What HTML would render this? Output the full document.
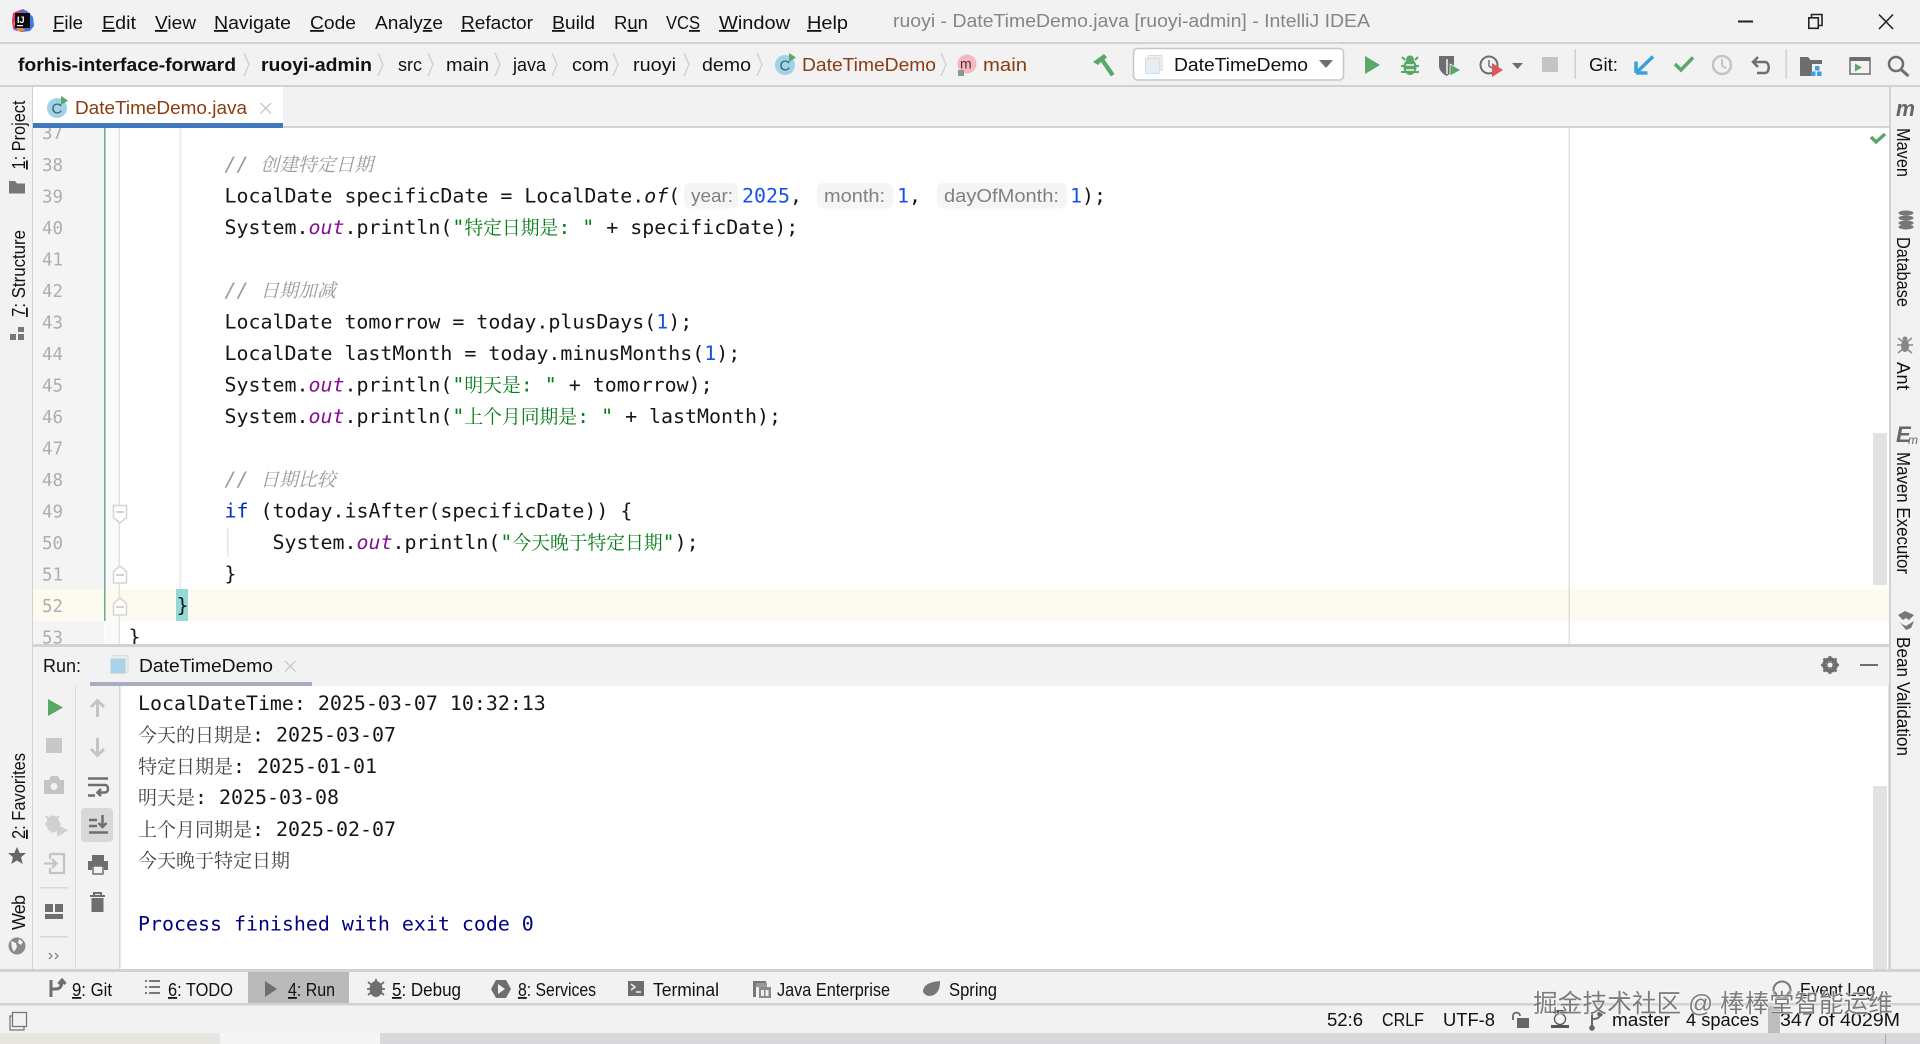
<!DOCTYPE html>
<html lang="zh"><head><meta charset="utf-8"><title>DateTimeDemo.java - IntelliJ IDEA</title>
<style>
html,body{margin:0;padding:0;width:1920px;height:1044px;overflow:hidden;background:#f2f2f2}
svg{display:block}
text{white-space:pre}
.s{font-family:"Liberation Sans","Noto Sans CJK SC",sans-serif;font-size:18px;fill:#111}
.b{font-weight:bold}
.o{fill:#8a3c10}
.m{font-family:"DejaVu Sans Mono","Liberation Mono",monospace;font-size:19.93px;fill:#151515}
.z{font-family:"Liberation Serif","Noto Serif CJK SC",serif;font-size:18.8px}
.y{font-family:"Liberation Serif","Noto Serif CJK SC",serif;font-size:19px;fill:#444}
.st{fill:#067d17}.cm{fill:#9a9a9a;font-style:italic}.k{fill:#0033b3}.n{fill:#1750eb}.f{fill:#871094;font-style:italic}
.ln{font-family:"DejaVu Sans Mono",monospace;font-size:17.5px;fill:#adadad}
.h{fill:#808080}
.u{text-decoration:underline}
</style></head><body>
<svg xmlns="http://www.w3.org/2000/svg" width="1920" height="1044" viewBox="0 0 1920 1044">
<rect width="1920" height="1044" fill="#f2f2f2"/>

<!-- editor -->
<rect x="33" y="128" width="1856" height="518" fill="#fff"/>
<rect x="33" y="128" width="71" height="518" fill="#f4f4f4"/>
<rect x="105" y="128" width="14" height="518" fill="#fafafa"/>
<rect x="33" y="589" width="1856" height="32" fill="#fdfbf0"/>
<rect x="104" y="128" width="1.6" height="493" fill="#6fae9c"/>
<rect x="118.5" y="128" width="1.6" height="518" fill="#e2e2e2"/>
<rect x="179.5" y="128" width="1.6" height="461" fill="#e8e8e8"/>
<rect x="227" y="528" width="1.5" height="29" fill="#e6e6e6"/>
<rect x="1568.5" y="128" width="1.5" height="518" fill="#dfdfdf"/>
<rect x="176" y="589" width="12" height="32" fill="#93d9d6"/>

<text class="ln" x="42" y="139">37</text>
<text class="ln" x="42" y="171">38</text>
<text class="ln" x="42" y="202.5">39</text>
<text class="ln" x="42" y="234">40</text>
<text class="ln" x="42" y="265.5">41</text>
<text class="ln" x="42" y="297">42</text>
<text class="ln" x="42" y="328.5">43</text>
<text class="ln" x="42" y="360">44</text>
<text class="ln" x="42" y="391.5">45</text>
<text class="ln" x="42" y="423">46</text>
<text class="ln" x="42" y="454.5">47</text>
<text class="ln" x="42" y="486">48</text>
<text class="ln" x="42" y="517.5">49</text>
<text class="ln" x="42" y="549">50</text>
<text class="ln" x="42" y="580.5">51</text>
<text class="ln" x="42" y="612">52</text>
<text class="ln" x="42" y="643.5">53</text>

<!-- fold marks -->
<g fill="#fff" stroke="#d4d4d4" stroke-width="1.5">
<path d="M113.5 505.5h13v12l-6.500 5.500-6.500-5.500z"/>
<path d="M113.5 583v-11.500l6.500-5.500 6.500 5.500v11.500z"/>
<path d="M113.500 615v-11.500l6.500-5.500 6.500 5.500v11.500z"/>
</g>
<path d="M116 512h8M116 575h8M116 607h8" stroke="#c4c4c4" stroke-width="1.500"/>

<text class="m" x="224.500" y="171"><tspan class="cm">// <tspan class="z">创建特定日期</tspan></tspan></text>
<text class="m" x="224.500" y="202.500">LocalDate specificDate = LocalDate.<tspan font-style="italic">of</tspan>(</text>
<rect x="684" y="183" width="54" height="25.500" rx="6" fill="#f5f5f5"/>
<text class="s h" x="691" y="202" textLength="42" lengthAdjust="spacingAndGlyphs">year:</text>
<text class="m n" x="742" y="202.500">2025</text><text class="m" x="790" y="202.500">,</text>
<rect x="817" y="183" width="76" height="25.500" rx="6" fill="#f5f5f5"/>
<text class="s h" x="824" y="202" textLength="61" lengthAdjust="spacingAndGlyphs">month:</text>
<text class="m n" x="897" y="202.500">1</text><text class="m" x="909" y="202.500">,</text>
<rect x="937" y="183" width="130" height="25.500" rx="6" fill="#f5f5f5"/>
<text class="s h" x="944" y="202" textLength="115" lengthAdjust="spacingAndGlyphs">dayOfMonth:</text>
<text class="m n" x="1070" y="202.500">1</text><text class="m" x="1082" y="202.500">);</text>

<text class="m" x="224.500" y="234">System.<tspan class="f">out</tspan>.println(<tspan class="st">"<tspan class="z">特定日期是</tspan>: "</tspan> + specificDate);</text>
<text class="m" x="224.500" y="297"><tspan class="cm">// <tspan class="z">日期加减</tspan></tspan></text>
<text class="m" x="224.500" y="328.500">LocalDate tomorrow = today.plusDays(<tspan class="n">1</tspan>);</text>
<text class="m" x="224.500" y="360">LocalDate lastMonth = today.minusMonths(<tspan class="n">1</tspan>);</text>
<text class="m" x="224.500" y="391.500">System.<tspan class="f">out</tspan>.println(<tspan class="st">"<tspan class="z">明天是</tspan>: "</tspan> + tomorrow);</text>
<text class="m" x="224.500" y="423">System.<tspan class="f">out</tspan>.println(<tspan class="st">"<tspan class="z">上个月同期是</tspan>: "</tspan> + lastMonth);</text>
<text class="m" x="224.500" y="486"><tspan class="cm">// <tspan class="z">日期比较</tspan></tspan></text>
<text class="m" x="224.500" y="517.500"><tspan class="k">if</tspan> (today.isAfter(specificDate)) {</text>
<text class="m" x="272.500" y="549">System.<tspan class="f">out</tspan>.println(<tspan class="st">"<tspan class="z">今天晚于特定日期</tspan>"</tspan>);</text>
<text class="m" x="224.500" y="580.500">}</text>
<text class="m" x="176.500" y="612">}</text>
<text class="m" x="128.500" y="643.500">}</text>

<!-- editor checkmark + scrollbar -->
<path d="M1871 137l5 5 9-8" fill="none" stroke="#59a869" stroke-width="3.500"/>
<rect x="1873" y="433" width="14" height="152" fill="#e2e2e2"/>

<!-- top chrome -->
<rect x="0" y="0" width="1920" height="42" fill="#f2f2f2"/>
<rect x="0" y="42" width="1920" height="2" fill="#d2d2d2"/>
<rect x="0" y="44" width="1920" height="41" fill="#f2f2f2"/>
<rect x="0" y="85" width="1920" height="2" fill="#d2d2d2"/>
<rect x="0" y="87" width="1920" height="39" fill="#f2f2f2"/>
<rect x="33" y="126" width="1856" height="2" fill="#d2d2d2"/>

<!-- logo -->
<g>
<path d="M15 12l8-3 5 3 5 6 1 8-4 5-8 1-8-2-2-7z" fill="#4b6fe0"/>
<path d="M13 13l9-3 2 8-4 10-7 1-1-9z" fill="#f0346b"/>
<path d="M13 23l5 8 7 0-8-10z" fill="#f6892d"/>
<path d="M26 10l7 7 1 9-6-2z" fill="#3f7ce8"/>
<rect x="15" y="13" width="15" height="15" fill="#0c0c0c"/>
<text x="17" y="23" font-family="Liberation Sans,sans-serif" font-size="9" font-weight="bold" fill="#fff">IJ</text>
<rect x="17" y="25" width="6" height="1.200" fill="#fff"/>
</g>

<!-- menu -->
<g>
<text class="s" x="53" y="29" textLength="30" lengthAdjust="spacingAndGlyphs"><tspan class="u">F</tspan>ile</text>
<text class="s" x="102" y="29" textLength="34" lengthAdjust="spacingAndGlyphs"><tspan class="u">E</tspan>dit</text>
<text class="s" x="155" y="29" textLength="41" lengthAdjust="spacingAndGlyphs"><tspan class="u">V</tspan>iew</text>
<text class="s" x="214" y="29" textLength="77" lengthAdjust="spacingAndGlyphs"><tspan class="u">N</tspan>avigate</text>
<text class="s" x="310" y="29" textLength="46" lengthAdjust="spacingAndGlyphs"><tspan class="u">C</tspan>ode</text>
<text class="s" x="375" y="29" textLength="68" lengthAdjust="spacingAndGlyphs">Analy<tspan class="u">z</tspan>e</text>
<text class="s" x="461" y="29" textLength="72" lengthAdjust="spacingAndGlyphs"><tspan class="u">R</tspan>efactor</text>
<text class="s" x="552" y="29" textLength="43" lengthAdjust="spacingAndGlyphs"><tspan class="u">B</tspan>uild</text>
<text class="s" x="614" y="29" textLength="34" lengthAdjust="spacingAndGlyphs">R<tspan class="u">u</tspan>n</text>
<text class="s" x="666" y="29" textLength="34" lengthAdjust="spacingAndGlyphs">VC<tspan class="u">S</tspan></text>
<text class="s" x="719" y="29" textLength="71" lengthAdjust="spacingAndGlyphs"><tspan class="u">W</tspan>indow</text>
<text class="s" x="807" y="29" textLength="41" lengthAdjust="spacingAndGlyphs"><tspan class="u">H</tspan>elp</text>
<text class="s" x="893" y="27" textLength="477" lengthAdjust="spacingAndGlyphs" style="fill:#858585">ruoyi - DateTimeDemo.java [ruoyi-admin] - IntelliJ IDEA</text>
</g>

<!-- window controls -->
<path d="M1738 21.500h15" stroke="#222" stroke-width="2"/>
<path d="M1808.800 17.800h9.500v10.500h-9.500zM1811.500 17.500v-3h10.500v11h-3.500" fill="none" stroke="#222" stroke-width="1.600"/>
<path d="M1879 14.500l14 14.500M1893 14.500l-14 14.500" stroke="#222" stroke-width="1.600"/>

<!-- breadcrumb -->
<g>
<text class="s b" x="18" y="71" textLength="218" lengthAdjust="spacingAndGlyphs">forhis-interface-forward</text>
<text class="s b" x="261" y="71" textLength="111" lengthAdjust="spacingAndGlyphs">ruoyi-admin</text>
<text class="s" x="398" y="71" textLength="24" lengthAdjust="spacingAndGlyphs">src</text>
<text class="s" x="446" y="71" textLength="43" lengthAdjust="spacingAndGlyphs">main</text>
<text class="s" x="513" y="71" textLength="33" lengthAdjust="spacingAndGlyphs">java</text>
<text class="s" x="572" y="71" textLength="37" lengthAdjust="spacingAndGlyphs">com</text>
<text class="s" x="633" y="71" textLength="43" lengthAdjust="spacingAndGlyphs">ruoyi</text>
<text class="s" x="702" y="71" textLength="49" lengthAdjust="spacingAndGlyphs">demo</text>
<text class="s o" x="802" y="71" textLength="134" lengthAdjust="spacingAndGlyphs">DateTimeDemo</text>
<text class="s o" x="983" y="71" textLength="44" lengthAdjust="spacingAndGlyphs">main</text>
<path d="M244 53l5 11.500-5 11.500M378 53l5 11.500-5 11.500M428 53l5 11.500-5 11.500M495 53l5 11.500-5 11.500M552 53l5 11.500-5 11.500M613 53l5 11.500-5 11.500M684 53l5 11.500-5 11.500M757 53l5 11.500-5 11.500M941 53l5 11.500-5 11.500" fill="none" stroke="#cdcdcd" stroke-width="1.300"/>
<!-- class icon nav -->
<circle cx="785" cy="65" r="10" fill="#9fd3ea"/>
<text x="779.500" y="70.500" font-family="Liberation Sans,sans-serif" font-size="15" fill="#46585f">C</text>
<path d="M789 53l7 4.500-7 4.500z" fill="#59a869"/>
<!-- method icon -->
<circle cx="967" cy="64" r="9.500" fill="#f4b8c2"/>
<text x="960" y="68.500" font-family="Liberation Sans,sans-serif" font-size="14" fill="#5e2c2c">m</text>
<rect x="958" y="70" width="6" height="6" fill="#8a9a8a"/>
</g>

<!-- toolbar -->
<path d="M1093 62l11-8 3 3-2.500 2.500 10 14.500-3.500 2.500-10-14.500-3 3z" fill="#59a869"/>
<rect x="1133.500" y="48.500" width="210" height="31.500" rx="4" fill="#fff" stroke="#c6c6c6" stroke-width="1.500"/>
<rect x="1148" y="55.500" width="14" height="15" fill="#efefef" stroke="#dcdcdc"/>
<rect x="1145.500" y="58.500" width="14" height="15" fill="#e6eef5" stroke="#dcdcdc"/>
<text class="s" x="1174" y="71" textLength="134" lengthAdjust="spacingAndGlyphs">DateTimeDemo</text>
<path d="M1319 60h14l-7 8z" fill="#6e6e6e"/>
<path d="M1365 56l15 9-15 9z" fill="#59a869"/>
<!-- debug bug -->
<g fill="#59a869">
<ellipse cx="1410" cy="67" rx="6.500" ry="8"/><circle cx="1410" cy="59.500" r="4"/>
<path d="M1402 57l3 3M1418 57l-3 3M1401 66h18M1401 72h18" stroke="#59a869" stroke-width="2"/>
</g>
<path d="M1406 65h8M1406 70h8" stroke="#f2f2f2" stroke-width="1.500"/>
<!-- coverage -->
<path d="M1439 56h15v10c0 4-3.500 8-7.500 10-4-2-7.500-6-7.500-10z" fill="#6e6e6e"/>
<path d="M1447 59v15" stroke="#f2f2f2" stroke-width="1.500"/>
<path d="M1450 64l11 6-11 6z" fill="#59a869" stroke="#f2f2f2" stroke-width=".8"/>
<!-- profiler -->
<circle cx="1489" cy="65" r="8.500" fill="none" stroke="#6e6e6e" stroke-width="2"/>
<path d="M1489 60v6l3 2" fill="none" stroke="#6e6e6e" stroke-width="1.500"/>
<path d="M1492 63l11 7-11 7z" fill="#e05555"/>
<path d="M1512 63h11l-5.500 6z" fill="#6e6e6e"/>
<rect x="1542" y="57" width="16" height="15" fill="#c4c4c4"/>
<rect x="1574.500" y="49" width="1.500" height="30" fill="#d0d0d0"/>
<text class="s" x="1589" y="71" textLength="29" lengthAdjust="spacingAndGlyphs">Git:</text>
<path d="M1636 73v-11.500M1636 73h11.500M1637 72l16-15.500" fill="none" stroke="#3d9edb" stroke-width="3.500"/>
<path d="M1675 64l6 6 12-12.500" fill="none" stroke="#59a869" stroke-width="3.500"/>
<circle cx="1722" cy="65" r="9" fill="none" stroke="#c4c4c4" stroke-width="2.500"/>
<path d="M1722 59v6.500l4 3" fill="none" stroke="#c4c4c4" stroke-width="2"/>
<path d="M1758 57l-5 5 5 5M1754 62h11c5 0 5 11 0 11h-8" fill="none" stroke="#6e6e6e" stroke-width="2.500"/>
<rect x="1785.500" y="49" width="1.500" height="30" fill="#d0d0d0"/>
<path d="M1800 57h8l2.500 3h11.500v4h-10v12h-12z" fill="#6e6e6e"/>
<g fill="#3d9edb"><rect x="1815" y="66" width="4.500" height="4.500"/><rect x="1811" y="71.500" width="4.500" height="4.500"/><rect x="1817" y="71.500" width="4.500" height="4.500"/></g>
<path d="M1850 58h20v16h-20z" fill="none" stroke="#6e6e6e" stroke-width="1.500"/>
<rect x="1850" y="57" width="20.500" height="4" fill="#6e6e6e"/>
<path d="M1855 63.500l7 4-7 4z" fill="#59a869"/>
<circle cx="1896" cy="64" r="7" fill="none" stroke="#6e6e6e" stroke-width="2.500"/>
<path d="M1901 69.500l7.500 6.500" stroke="#6e6e6e" stroke-width="3"/>

<!-- editor tab -->
<rect x="32" y="87" width="251" height="36" fill="#fff"/>
<rect x="32" y="123" width="251" height="5" fill="#4078c0"/>
<circle cx="57" cy="108" r="10" fill="#9fd3ea"/>
<text x="51.500" y="113.500" font-family="Liberation Sans,sans-serif" font-size="15" fill="#46585f">C</text>
<path d="M61 96l7 4.500-7 4.500z" fill="#59a869"/>
<text class="s o" x="75" y="114" textLength="172" lengthAdjust="spacingAndGlyphs">DateTimeDemo.java</text>
<path d="M260.500 103l10.500 10.500M271 103l-10.500 10.500" stroke="#c8c8c8" stroke-width="1.300"/>

<!-- run panel -->
<rect x="33" y="644" width="1856" height="3" fill="#d2d2d2"/>
<rect x="33" y="647" width="1856" height="35" fill="#f2f2f2"/>
<rect x="33" y="682" width="1856" height="4" fill="#f2f2f2"/>
<text class="s" x="43" y="672" textLength="38" lengthAdjust="spacingAndGlyphs">Run:</text>
<rect x="113" y="655.500" width="15" height="17" fill="#ececec" stroke="#dcdcdc"/>
<rect x="110.500" y="658.500" width="15" height="15" fill="#a7d4ea" stroke="#dcdcdc"/>
<text class="s" x="139" y="672" textLength="134" lengthAdjust="spacingAndGlyphs">DateTimeDemo</text>
<path d="M285 661l10.500 10.500M295.500 661l-10.500 10.500" stroke="#c8c8c8" stroke-width="1.300"/>
<rect x="90" y="682" width="222" height="4" fill="#a9adc2"/>
<!-- gear & minimize -->
<circle cx="1830" cy="665" r="6" fill="none" stroke="#6e6e6e" stroke-width="3.500"/>
<path d="M1830 656v18M1821 665h18M1823.500 658.500l13 13M1836.500 658.500l-13 13" stroke="#6e6e6e" stroke-width="2.500"/>
<circle cx="1830" cy="665" r="2.500" fill="#f2f2f2"/>
<path d="M1860 665h18" stroke="#6e6e6e" stroke-width="2"/>

<!-- console -->
<rect x="33" y="686" width="87" height="283" fill="#f2f2f2"/>
<rect x="75" y="686" width="1" height="283" fill="#dadada"/>
<rect x="119" y="686" width="1.500" height="283" fill="#d6d6d6"/>
<rect x="120.500" y="686" width="1768.500" height="283" fill="#fff"/>
<rect x="1873" y="786" width="14" height="183" fill="#e2e2e2"/>
<rect x="1888" y="686" width="1" height="283" fill="#e0e0e0"/>
<g>
<text class="m" x="138" y="710">LocalDateTime: 2025-03-07 10:32:13</text>
<text class="m" x="138" y="741.500"><tspan class="y">今天的日期是</tspan>: 2025-03-07</text>
<text class="m" x="138" y="773"><tspan class="y">特定日期是</tspan>: 2025-01-01</text>
<text class="m" x="138" y="804"><tspan class="y">明天是</tspan>: 2025-03-08</text>
<text class="m" x="138" y="836"><tspan class="y">上个月同期是</tspan>: 2025-02-07</text>
<text class="m" x="138" y="867"><tspan class="y">今天晚于特定日期</tspan></text>
<text class="m" x="138" y="930.500" style="fill:#000080">Process finished with exit code 0</text>
</g>

<!-- run toolbar icons -->
<path d="M48 699l15 8.500-15 8.500z" fill="#59a869"/>
<path d="M97.500 717v-15M91 707l6.500-6.500 6.500 6.500" fill="none" stroke="#c4c4c4" stroke-width="3"/>
<rect x="46" y="738" width="16" height="15" fill="#c8c8c8"/>
<path d="M97.500 738v15M91 749l6.500 6.500 6.500-6.500" fill="none" stroke="#c4c4c4" stroke-width="3"/>
<path d="M44 780h5l2-4h7l2 4h4v14h-20z" fill="#c4c4c4"/><circle cx="54" cy="786.500" r="3.500" fill="#f2f2f2"/>
<path d="M88 778.500h20M88 785h17c4 0 4 7.500 0 7.500h-6M88 795.500h7M101 789l-3.500 3.500 3.500 3.500" fill="none" stroke="#6e6e6e" stroke-width="2.500"/>
<ellipse cx="53" cy="824" rx="6.500" ry="8.500" fill="#d0d0d0"/><path d="M58 826l8 4.500-8 4.500zM46 816l3 3M59 816l-3 3M45 824h16" stroke="#d0d0d0" stroke-width="2" fill="#d0d0d0"/>
<rect x="81" y="808" width="32" height="34" rx="4" fill="#d8d8d8"/>
<path d="M89 820h8M89 826h8M89 832.500h19M102.500 815v12M98.500 823l4 4 4-4" fill="none" stroke="#6e6e6e" stroke-width="2.500"/>
<path d="M50 854h14v19h-14v-5M50 859v-5M44 863.500h12M52 859l4.500 4.500-4.500 4.500" fill="none" stroke="#c4c4c4" stroke-width="2.200"/>
<path d="M92 855h12v6h4v9h-4v-3h-12v3h-4v-9h4z" fill="#6e6e6e"/><rect x="93" y="866" width="10" height="8" fill="#f2f2f2" stroke="#6e6e6e" stroke-width="1.500"/>
<rect x="40" y="887" width="28" height="1.500" fill="#d8d8d8"/>
<rect x="45" y="904" width="8" height="8" fill="#6e6e6e"/><rect x="55" y="904" width="8" height="8" fill="#6e6e6e"/><rect x="45" y="914" width="18" height="5" fill="#6e6e6e"/>
<path d="M90 896h15M94 896v-3h7v3" fill="none" stroke="#6e6e6e" stroke-width="2"/><path d="M91.500 898h12v14h-12z" fill="#6e6e6e"/>
<rect x="40" y="936" width="28" height="1.500" fill="#d8d8d8"/>
<path d="M49 953l3 3-3 3M55 953l3 3-3 3" fill="none" stroke="#777" stroke-width="1.200"/>

<!-- left stripe -->
<rect x="32" y="87" width="1" height="882" fill="#d2d2d2"/>
<rect x="0" y="87" width="32" height="882" fill="#f2f2f2"/>
<text class="s" transform="translate(25,169.500) rotate(-90)" textLength="69" lengthAdjust="spacingAndGlyphs"><tspan class="u">1</tspan>: Project</text>
<path d="M9 181h6l2 2.500h8v10h-16z" fill="#777"/>
<text class="s" transform="translate(25,317) rotate(-90)" textLength="87" lengthAdjust="spacingAndGlyphs"><tspan class="u">7</tspan>: Structure</text>
<path d="M18 327h6v5h-6zM10 334h6v6h-6zM18 334h6v6h-6z" fill="#777"/>
<text class="s" transform="translate(25,839) rotate(-90)" textLength="86" lengthAdjust="spacingAndGlyphs"><tspan class="u">2</tspan>: Favorites</text>
<path d="M17 847l2.700 6h6.300l-5 4.300 1.800 6.700-5.800-3.500-5.800 3.500 1.800-6.700-5-4.300h6.300z" fill="#666"/>
<text class="s" transform="translate(25,930) rotate(-90)" textLength="35">Web</text>
<circle cx="17" cy="946" r="8.500" fill="#8a8a8a"/>
<path d="M11 941l5 2 1 4-3 5-2-4zM19 939l4 3-2 3-3-2z" fill="#f2f2f2"/>

<!-- right stripe -->
<rect x="1889" y="87" width="2" height="882" fill="#d2d2d2"/>
<rect x="1891" y="87" width="29" height="947" fill="#f2f2f2"/>
<text x="1896" y="116" font-family="Liberation Sans,sans-serif" font-size="22" font-weight="bold" font-style="italic" fill="#666" textLength="19" lengthAdjust="spacingAndGlyphs">m</text>
<text class="s" transform="translate(1897,128) rotate(90)" textLength="49" lengthAdjust="spacingAndGlyphs">Maven</text>
<ellipse cx="1906" cy="213" rx="7.500" ry="2.500" fill="#777"/><ellipse cx="1906" cy="218" rx="7.500" ry="2.500" fill="#777"/><ellipse cx="1906" cy="223" rx="7.500" ry="2.500" fill="#777"/><ellipse cx="1906" cy="227" rx="7.500" ry="2.500" fill="#777"/>
<text class="s" transform="translate(1897,237) rotate(90)" textLength="70" lengthAdjust="spacingAndGlyphs">Database</text>
<ellipse cx="1905" cy="346" rx="4" ry="6" fill="#888"/><circle cx="1905" cy="339" r="2.500" fill="#888"/>
<path d="M1898 338l5 4M1912 338l-5 4M1897 345h16M1898 353l5-4M1912 353l-5-4" stroke="#888" stroke-width="1.500"/>
<text class="s" transform="translate(1897,362) rotate(90)" textLength="28">Ant</text>
<text x="1896" y="442" font-family="Liberation Sans,sans-serif" font-size="22" font-weight="bold" font-style="italic" fill="#666">E</text>
<text x="1908" y="444" font-family="Liberation Sans,sans-serif" font-size="12" font-style="italic" fill="#666">m</text>
<text class="s" transform="translate(1897,452) rotate(90)" textLength="122" lengthAdjust="spacingAndGlyphs">Maven Executor</text>
<path d="M1898 615l7-4 9 4-5 5-3-2-3 2zM1899 621l3 3 4 2 8-5-3 7-5 2z" fill="#777"/>
<text class="s" transform="translate(1897,637) rotate(90)" textLength="119" lengthAdjust="spacingAndGlyphs">Bean Validation</text>

<!-- bottom tool bar -->
<rect x="0" y="969" width="1920" height="3" fill="#d2d2d2"/>
<rect x="0" y="972" width="1920" height="31" fill="#f2f2f2"/>
<rect x="248" y="972" width="101" height="31" fill="#bababa"/>
<rect x="0" y="1003" width="1920" height="2.500" fill="#d2d2d2"/>
<rect x="0" y="1005.500" width="1920" height="27.500" fill="#f2f2f2"/>
<rect x="0" y="1033" width="220" height="11" fill="#e7e6e1"/>
<rect x="220" y="1033" width="160" height="11" fill="#f5f5f5"/>
<rect x="380" y="1033" width="1540" height="11" fill="#d9d8dc"/>
<rect x="1885" y="1034" width="1" height="10" fill="#aaa"/>

<g transform="translate(0,2)">
<path d="M51 978v17M51 987h5c4 0 6-3 6-8M58.500 982l3.500-4 3.500 4" fill="none" stroke="#6e6e6e" stroke-width="3"/>
<path d="M149 979h11M149 985h11M149 991h11M145 979h2M145 985h2M145 991h2" stroke="#777" stroke-width="2"/>
<path d="M265 979l12 8-12 8z" fill="#6e6e6e"/>
<ellipse cx="376" cy="987" rx="6.500" ry="8" fill="#6e6e6e"/>
<path d="M368 980l16 13M384 980l-16 13M367 987h18M376 977v5" stroke="#6e6e6e" stroke-width="1.800"/>
<path d="M496 978h10l5 9-5 9h-10l-5-9z" fill="#6e6e6e"/><path d="M498 982l7 5-7 5z" fill="#f2f2f2"/>
<rect x="628" y="979" width="16" height="15" fill="#6e6e6e"/><path d="M631 982l4 3-4 3M636 990h5" fill="none" stroke="#f2f2f2" stroke-width="1.500"/>
<path d="M753 979h13v3h-10v13h-3z" fill="#777"/><rect x="756" y="981" width="11" height="4" fill="#999"/><rect x="759" y="985" width="12" height="11" fill="#8a8a8a"/>
<path d="M761 988h3v6h-3zM765.500 988h3v6h-3z" fill="#eee"/>
<path d="M923 990c0-7 6-10 17-11 0 9-3 14-10 15-3 0-5-1-7-4z" fill="#777"/>
</g>
<text class="s" x="72" y="996" textLength="40" lengthAdjust="spacingAndGlyphs"><tspan class="u">9</tspan>: Git</text>
<text class="s" x="168" y="996" textLength="65" lengthAdjust="spacingAndGlyphs"><tspan class="u">6</tspan>: TODO</text>
<text class="s" x="288" y="996" textLength="47" lengthAdjust="spacingAndGlyphs"><tspan class="u">4</tspan>: Run</text>
<text class="s" x="392" y="996" textLength="69" lengthAdjust="spacingAndGlyphs"><tspan class="u">5</tspan>: Debug</text>
<text class="s" x="518" y="996" textLength="78" lengthAdjust="spacingAndGlyphs"><tspan class="u">8</tspan>: Services</text>
<text class="s" x="653" y="996" textLength="66" lengthAdjust="spacingAndGlyphs">Terminal</text>
<text class="s" x="777" y="996" textLength="113" lengthAdjust="spacingAndGlyphs">Java Enterprise</text>
<text class="s" x="949" y="996" textLength="48" lengthAdjust="spacingAndGlyphs">Spring</text>

<!-- status bar -->
<rect x="10" y="1016" width="14" height="14" fill="none" stroke="#777" stroke-width="1.300"/>
<rect x="12.500" y="1012.500" width="14" height="14" fill="#f2f2f2" stroke="#777" stroke-width="1.300"/>
<text class="s" x="1327" y="1026" textLength="36" lengthAdjust="spacingAndGlyphs">52:6</text>
<text class="s" x="1382" y="1026" textLength="42" lengthAdjust="spacingAndGlyphs">CRLF</text>
<text class="s" x="1443" y="1026" textLength="52" lengthAdjust="spacingAndGlyphs">UTF-8</text>
<path d="M1513 1020v-4c0-4.500 7-4.500 7 0" fill="none" stroke="#666" stroke-width="1.800"/><rect x="1517" y="1018" width="12" height="10" fill="#666"/>
<circle cx="1560" cy="1019" r="5.500" fill="#f2f2f2" stroke="#555" stroke-width="1.300"/><path d="M1552 1013h16l-3-3h-10zM1551 1028h18v-3h-18z" fill="#555"/>
<circle cx="1592" cy="1028" r="2.800" fill="#666"/><circle cx="1600" cy="1014" r="2.800" fill="#666"/><path d="M1592 1012v15M1592 1019c5 0 8-1 8-5" fill="none" stroke="#666" stroke-width="2"/>
<text class="s" x="1612" y="1026" textLength="58" lengthAdjust="spacingAndGlyphs">master</text>
<text class="s" x="1686" y="1026" textLength="73" lengthAdjust="spacingAndGlyphs">4 spaces</text>
<rect x="1768" y="1006" width="12" height="27" fill="#bdbdbd"/>
<text class="s" x="1780" y="1026" textLength="120" lengthAdjust="spacingAndGlyphs">347 of 4029M</text>

<!-- event log -->
<circle cx="1782" cy="990" r="8.500" fill="none" stroke="#777" stroke-width="2"/>
<text class="s" x="1800" y="996" textLength="75" lengthAdjust="spacingAndGlyphs">Event Log</text>

<!-- watermark -->
<text x="1533" y="1012" textLength="360" lengthAdjust="spacingAndGlyphs" font-family="Liberation Sans,Noto Sans CJK SC,sans-serif" font-size="25" fill="#666" fill-opacity=".85" stroke="#fff" stroke-opacity=".75" stroke-width="1.200" style="paint-order:stroke">掘金技术社区 @ 棒棒堂智能运维</text>
</svg>
</body></html>
